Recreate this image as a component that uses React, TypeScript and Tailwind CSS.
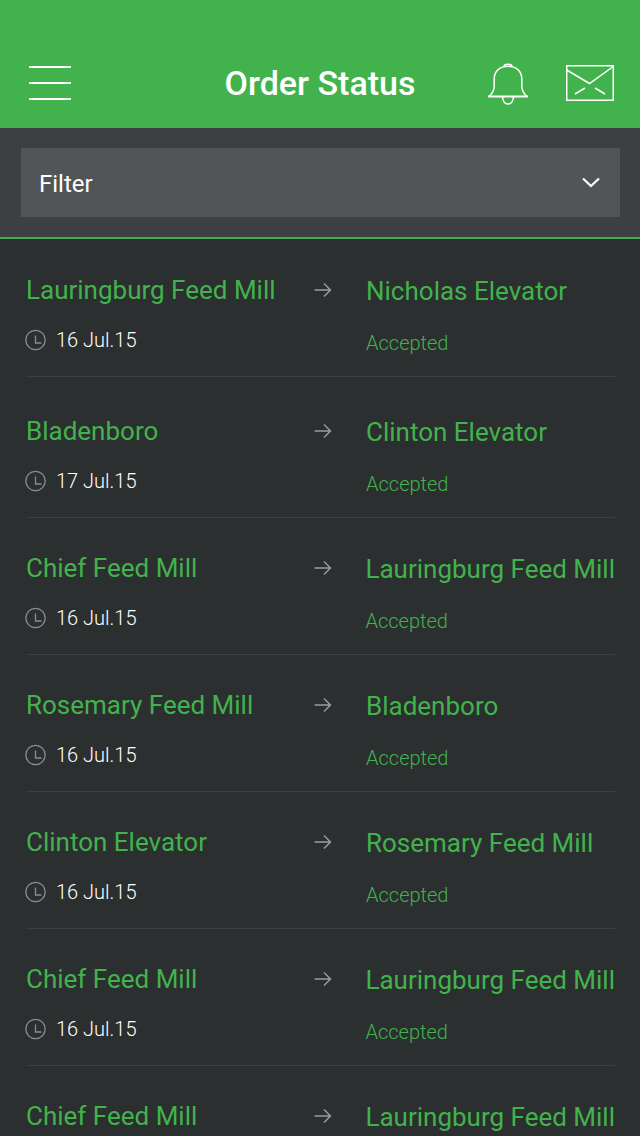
const rows = [
  { from: "Lauringburg Feed Mill", to: "Nicholas Elevator", date: "16 Jul.15", size: "h-[138px] pt-[1px]" },
  { from: "Bladenboro", to: "Clinton Elevator", date: "17 Jul.15", size: "h-[141px] pt-[4px]" },
  { from: "Chief Feed Mill", to: "Lauringburg Feed Mill", date: "16 Jul.15", size: "h-[137px]" },
  { from: "Rosemary Feed Mill", to: "Bladenboro", date: "16 Jul.15", size: "h-[137px]" },
  { from: "Clinton Elevator", to: "Rosemary Feed Mill", date: "16 Jul.15", size: "h-[137px]" },
  { from: "Chief Feed Mill", to: "Lauringburg Feed Mill", date: "16 Jul.15", size: "h-[137px]" },
  { from: "Chief Feed Mill", to: "Lauringburg Feed Mill", date: "16 Jul.15", size: "h-[137px]" },
];

function Bell() {
  return (
    <svg width="42" height="44" viewBox="0 0 42 44" fill="none" stroke="#fff" strokeWidth="1.5">
      <path d="M1 33.5 H41" strokeWidth="2" />
      <path d="M2 33.5 C5.5 30.5 7.2 28 7.2 23 V16 C7.2 8 13 3.300 21 3.300 C29 3.300 34.800 8 34.800 16 V23 C34.800 28 36.500 30.500 40 33.500" />
      <path d="M17 3.500 C17 0.500 25 0.500 25 3.500" />
      <path d="M15.500 34 C16 38.500 18 41 21 41 C24 41 26 38.500 26.500 34" />
    </svg>
  );
}

function Mail() {
  return (
    <svg className="mb-[4px]" width="48" height="36" viewBox="0 0 48 36" fill="none" stroke="#fff" strokeWidth="1.500">
      <path d="M0 0.750 H48 M0.750 0 V35.250 H47.250 V1" />
      <path d="M0.750 5 L23.500 18.500 L47.250 1.500" />
      <path d="M9 29 L19 23 M39 29 L29 23" />
    </svg>
  );
}

function Clock() {
  return (
    <svg width="22" height="22" viewBox="0 0 22 22" fill="none" stroke="#8b8d8e" strokeWidth="1.300">
      <circle cx="11.500" cy="11" r="9.700" />
      <path d="M11.500 6.500 V14 H17.500" />
    </svg>
  );
}

function Arrow() {
  return (
    <svg width="18" height="16" viewBox="0 0 18 16" fill="none" stroke="#9a9c9d" strokeWidth="1.400">
      <path d="M0.500 8 H16.500 M10 1.500 L16.500 8 L10 14.500" />
    </svg>
  );
}

export default function App() {
  return (
    <div className="w-[640px] h-[1136px] overflow-hidden bg-[#2c2f30] font-['Roboto',sans-serif]">
      <header className="h-[128px] bg-[#42b34c] flex items-end pb-[20px] relative">
        <div className="ml-[29px] w-[42px] flex flex-col gap-[14px] mb-[8px]">
          <div className="h-[2px] bg-white" />
          <div className="h-[2px] bg-white" />
          <div className="h-[2px] bg-white" />
        </div>
        <h1 className="absolute left-0 right-0 top-[62px] text-center text-[34px] leading-[42px] font-medium text-white">Order Status</h1>
        <div className="ml-auto mr-[26px] flex items-center gap-[37px] mb-[1px]">
          <Bell />
          <Mail />
        </div>
      </header>
      <div className="h-[111px] bg-[#3c4043] border-b-2 border-[#42b34c] pt-[20px] pl-[21px] pr-[20px]">
        <div className="h-[69px] bg-[#525557] flex items-center justify-between pl-[18px] pr-[20px]">
          <span className="text-[24px] leading-[32px] pt-[2px] text-white">Filter</span>
          <svg width="18" height="11" viewBox="0 0 18 11" fill="none" stroke="#fff" strokeWidth="2.200">
            <path d="M1 1.500 L9 9 L17 1.500" />
          </svg>
        </div>
      </div>
      <ul>
        {rows.map((r, i) => (
          <li key={i} className={"ml-[26px] mr-[25px] border-b border-[#3c3f40] flex " + r.size}>
            <div className="w-[340px] flex flex-col">
              <div className="flex items-center justify-between w-[306px] pt-[34px] h-[66px]">
                <span className="text-[26px] leading-[32px] font-normal text-[#42b34c] whitespace-nowrap">{r.from}</span>
                <Arrow />
              </div>
              <div className="flex items-center gap-[10px] mt-[20px] -ml-[2px]">
                <Clock />
                <span className="text-[20px] leading-[28px] font-light text-white">{r.date}</span>
              </div>
            </div>
            <div className="flex flex-col">
              <span className="pt-[35px] text-[26px] leading-[32px] font-normal text-[#42b34c] whitespace-nowrap">{r.to}</span>
              <span className="mt-[23px] text-[20px] leading-[26px] font-light text-[#42b34c]">Accepted</span>
            </div>
          </li>
        ))}
      </ul>
    </div>
  );
}
